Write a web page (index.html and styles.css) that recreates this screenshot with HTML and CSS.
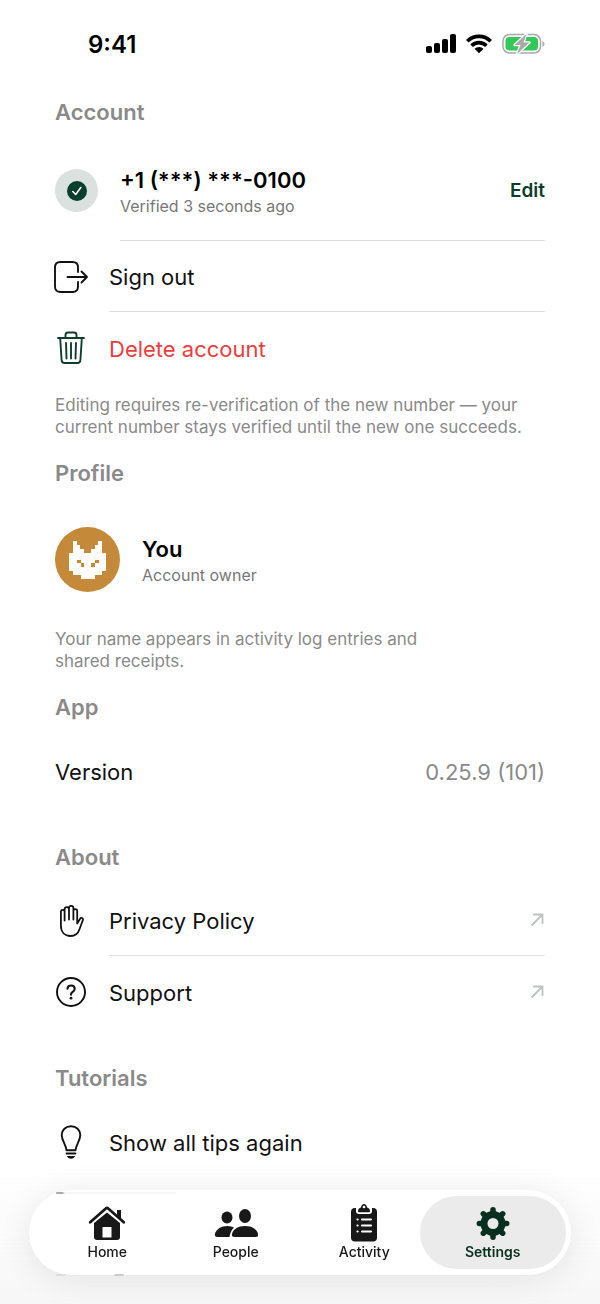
FILE: index.html
```html
<!DOCTYPE html>
<html lang="en">
<head>
<meta charset="utf-8">
<meta name="viewport" content="width=device-width, initial-scale=1">
<title>Settings</title>
<link rel="stylesheet" href="styles.css">
</head>
<body>
<header class="status">
  <time class="clock">9:41</time>
  <div class="indicators">
    <svg width="30" height="20" viewBox="0 0 30 20" fill="#000" aria-label="Signal"><rect x="0" y="12" width="6" height="7" rx="2"/><rect x="8" y="9" width="6" height="10" rx="2"/><rect x="16" y="5" width="6" height="14" rx="2"/><rect x="24" y="0" width="6" height="19" rx="2"/></svg>
    <svg width="26" height="20" viewBox="0 0 26 20" aria-label="Wi-Fi"><g fill="none" stroke="#000" stroke-width="3.6"><path d="M1.3 7.2a16.6 16.6 0 0 1 23.4 0"/><path d="M5.6 11.7a10.5 10.5 0 0 1 14.8 0"/></g><path d="M8.6 14.7a6.3 6.3 0 0 1 8.8 0L13 19.2z"/></svg>
    <svg width="43" height="22" viewBox="0 0 43 22" aria-label="Battery charging"><rect x="1" y="1.500" width="37.500" height="18.500" rx="6.500" fill="none" stroke="#aaa" stroke-width="1.500"/><rect x="3.500" y="4" width="32.500" height="13.500" rx="4" fill="#34c759"/><path d="M40.500 8v6q2-1 2-3t-2-3z" fill="#aaa"/><path d="M24.500 1 12.500 12h6l-3.500 9L27.500 9.500h-6z" fill="#aaa" stroke="#fff" stroke-width="2.400" stroke-linejoin="round" paint-order="stroke"/></svg>
  </div>
</header>

<main class="page">
  <section class="section">
    <h2 class="heading">Account</h2>
    <div class="person">
      <span class="badge">
        <svg width="20" height="20" viewBox="0 0 20 20"><circle cx="10" cy="10" r="10" fill="#0b3d2c"/><path d="M5.800 10.500 8.700 13.500 13.800 6.500" fill="none" stroke="#fff" stroke-width="1.600" stroke-linecap="round" stroke-linejoin="round"/></svg>
      </span>
      <div class="person-body line">
        <div class="lines">
          <strong class="name">+1 (***) ***-0100</strong>
          <span class="detail">Verified 3 seconds ago</span>
        </div>
        <button class="edit" type="button">Edit</button>
      </div>
    </div>
    <button class="row" type="button">
      <svg class="icon" width="36" height="36" viewBox="0 0 36 36" fill="none" stroke="#111" stroke-width="1.900" stroke-linecap="round" stroke-linejoin="round"><path d="M25 13V8.500Q25 3 19.500 3H7.500Q2 3 2 8.500v19Q2 33 7.500 33h12Q25 33 25 27.500V23M14.500 18H34M28.500 12.500 34 18l-5.500 5.500"/></svg>
      <span class="label line">Sign out</span>
    </button>
    <button class="row danger" type="button">
      <svg class="icon" width="36" height="36" viewBox="0 0 36 36" fill="none" stroke="#123d2c" stroke-width="1.900" stroke-linecap="round" stroke-linejoin="round"><path d="M5 8h26M12.500 7.500V5Q12.500 2.500 15 2.500h6Q23.500 2.500 23.500 5v2.500M7.200 8.500l1.400 21.500Q8.800 33 11.500 33h13Q27.200 33 27.400 30l1.400-21.500M13 13l.5 15.500M18 13v15.500M23 13l-.5 15.500"/></svg>
      <span class="label">Delete account</span>
    </button>
    <p class="note">Editing requires re-verification of the new number — your current number stays verified until the new one succeeds.</p>
  </section>

  <section class="section">
    <h2 class="heading">Profile</h2>
    <div class="person tall">
      <svg class="avatar" width="65" height="65" viewBox="0 0 66 66" shape-rendering="crispEdges"><circle cx="33" cy="33" r="33" fill="#c48a39" shape-rendering="auto"/><path fill="#fff" d="M18 14h4v4h3v4h4v4h8v-4h4v-4h3v-4h4v12h4v19h-4v4h-7v4H26v-4h-8v-4h-4V26h4z"/><path fill="#c48a39" d="M22 33h4v4h-4zM26 37h3v4h-3zM41 33h4v4h-4zM37 37h4v4h-4z"/></svg>
      <div class="person-body">
        <div class="lines">
          <strong class="name">You</strong>
          <span class="detail">Account owner</span>
        </div>
      </div>
    </div>
    <p class="note narrow">Your name appears in activity log entries and shared receipts.</p>
  </section>

  <section class="section">
    <h2 class="heading">App</h2>
    <div class="row"><span class="label">Version</span><span class="value">0.25.9 (101)</span></div>
  </section>

  <section class="section spaced">
    <h2 class="heading">About</h2>
    <a class="row" href="#privacy">
      <svg class="icon" width="36" height="36" viewBox="0 0 36 36" fill="none" stroke="#111" stroke-width="1.800" stroke-linecap="round" stroke-linejoin="round"><path d="M11.600 17.500V8.300a1.900 1.900 0 0 0-3.700 0V22.500c0 6.500 3.800 10.500 9.600 10.500 4.800 0 7.700-2.500 9.100-7l3.300-9c.7-2-1.800-3-2.800-1.200L24.200 20.500V8a1.800 1.800 0 0 0-3.700-.2M24.200 8v9M20.400 16.500V5a2 2 0 0 0-4.400 0v11.500M16 16.500V6.300a2 2 0 0 0-4.400 0v11"/></svg>
      <span class="label line">Privacy Policy</span>
      <svg class="arrow" width="15" height="14" viewBox="0 0 15 14" fill="none" stroke="#bfc3c2" stroke-width="1.800"><path d="M1.500 12.500 12.500 1.500M3 1.500h9.500v9.500"/></svg>
    </a>
    <a class="row" href="#support">
      <svg class="icon" width="36" height="36" viewBox="0 0 36 36" fill="none" stroke="#111" stroke-width="1.900" stroke-linecap="round"><circle cx="18" cy="18" r="14"/><path d="M14.500 14.800c.1-2 1.500-3.300 3.600-3.300s3.600 1.300 3.600 3.200c0 1.500-.8 2.300-2 3.100s-1.700 1.400-1.700 2.600v.3" stroke-width="2.100"/><circle cx="18" cy="24.200" r="1.400" fill="#111" stroke="none"/></svg>
      <span class="label">Support</span>
      <svg class="arrow" width="15" height="14" viewBox="0 0 15 14" fill="none" stroke="#bfc3c2" stroke-width="1.800"><path d="M1.500 12.500 12.500 1.500M3 1.500h9.500v9.500"/></svg>
    </a>
  </section>

  <section class="section spaced">
    <h2 class="heading">Tutorials</h2>
    <button class="row" type="button">
      <svg class="icon" width="36" height="36" viewBox="0 0 36 36" fill="none" stroke="#111" stroke-width="1.900" stroke-linecap="round" stroke-linejoin="round"><path d="M13.500 26.200C13.200 21 8.700 16.500 8.700 11c0-5 4-8.800 9.300-8.800s9.300 3.800 9.300 8.800c0 5.500-4.500 10-4.800 15.200zM13.500 29.500h9"/><path d="M14 32h8q-1 2.800-4 2.800T14 32z" fill="#111" stroke="none"/></svg>
      <span class="label">Show all tips again</span>
    </button>
  </section>
</main>

<div class="dock">
  <nav class="tabs">
    <a class="tab" href="#home">
      <svg width="40" height="40" viewBox="0 0 40 40"><path d="M20 9.500 33 20v14q0 3-3 3H10q-3 0-3-3V20z" fill="#181818"/><path d="M3.200 18.800 18.400 5.400q1.600-1.400 3.200 0l15.200 13.400" fill="none" stroke="#fff" stroke-width="6"/><path d="M30 7h4V16.500L30 13z" fill="#181818"/><path d="M3.200 19.300 18.800 5.500q1.200-1 2.400 0l15.600 13.800" fill="none" stroke="#181818" stroke-width="2.800" stroke-linecap="round"/><path d="M15.500 24h9v10.500h-9z" fill="#fff"/></svg>
      <span>Home</span>
    </a>
    <a class="tab" href="#people">
      <svg width="44" height="40" viewBox="0 0 44 40" fill="#181818"><ellipse cx="13" cy="14.500" rx="5.500" ry="6"/><path d="M3.500 34C1 34 .5 32.500 1 30.500 2.500 26 7 23 13.500 23q4 0 6.500 1.500-3.500 3-4.500 9.500z"/><ellipse cx="31" cy="13" rx="6" ry="7"/><path d="M31 23c7 0 12 3.300 13 8 .4 2-.2 3-2.500 3h-21c-2.300 0-2.900-1-2.500-3 1-4.700 6-8 13-8z"/></svg>
      <span>People</span>
    </a>
    <a class="tab" href="#activity">
      <svg width="40" height="40" viewBox="0 0 40 40"><rect x="7" y="5" width="26" height="33.500" rx="4" fill="#181818"/><path d="M12 3h16v5q0 3-3 3H15q-3 0-3-3z" fill="#fff"/><path d="M14 8.500Q14 5 17 4.500 17.500 1 20 1t3 3.500q3 .5 3 4 0 .8-1 .8H15q-1 0-1-.8z" fill="#181818"/><circle cx="20" cy="4" r="1.300" fill="#fff"/><g stroke="#fff" stroke-width="2.200" stroke-linecap="round"><path d="M13.500 16.500h.1M18 16.500h9M13.500 22.500h.1M18 22.500h9M13.500 28.500h.1M18 28.500h9"/></g></svg>
      <span>Activity</span>
    </a>
    <a class="tab current" href="#settings" aria-current="page">
      <svg width="40" height="40" viewBox="0 0 40 40"><g fill="none" stroke="#082f20" stroke-linecap="round"><circle cx="20" cy="20.500" r="9" stroke-width="7"/><path d="M20 6.800v27.400M6.300 20.500h27.400M10.300 10.800l19.400 19.400M10.300 30.200l19.400-19.400" stroke-width="5.500"/></g><circle cx="20" cy="20.500" r="5.500" fill="#ebebeb"/></svg>
      <span>Settings</span>
    </a>
  </nav>
</div>
</body>
</html>
```
FILE: styles.css
```css
* { box-sizing: border-box; }

body {
  margin: 0;
  min-height: 100vh;
  background: #fff;
  color: #111;
  font-family: Inter, "Liberation Sans", sans-serif;
  font-size: 22px;
}

svg { display: block; flex: none; }

.status {
  display: flex;
  align-items: center;
  justify-content: space-between;
  height: 98px;
  padding: 0 55px 10px 88px;
}

.clock { font-size: 24px; font-weight: 600; color: #000; }
.indicators { display: flex; align-items: center; gap: 10px; }

.page { padding: 0 55px 127px; }
.section + .section { margin-top: 21px; }
.section + .spaced { margin-top: 37px; }

.heading {
  margin: 0 0 14px;
  font-size: 22px;
  line-height: 28px;
  font-weight: 600;
  color: #8a8a8a;
}

.row {
  display: flex;
  align-items: center;
  width: 100%;
  height: 71px;
  padding: 0;
  border: 0;
  background: none;
  color: #111;
  font: inherit;
  text-align: left;
  text-decoration: none;
}

.icon { margin: 0 20px 0 -2px; }

.label {
  display: flex;
  flex: 1;
  align-items: center;
  align-self: stretch;
  padding-top: 2px;
}

.line,
.line + .arrow { border-bottom: 1px solid #dedede; }
.line + .arrow { align-self: stretch; height: auto; }
.value { padding-top: 2px; color: #8a8a8a; }
.danger { color: #eb3d40; }

.person { display: flex; height: 101px; align-items: center; }
.person-body {
  display: flex;
  flex: 1;
  align-self: stretch;
  align-items: center;
  justify-content: space-between;
  margin-left: 22px;
}
.lines { display: flex; flex-direction: column; padding-top: 4px; }
.name { font-size: 22px; line-height: 28px; font-weight: 600; color: #000; }
.detail { font-size: 16px; line-height: 24px; color: #777; }
.tall { height: 116px; }

.badge {
  display: grid;
  place-items: center;
  width: 43px;
  height: 43px;
  border-radius: 50%;
  background: #dbe1df;
}

.edit {
  padding: 0;
  border: 0;
  background: none;
  color: #0b3d2c;
  font: inherit;
  font-size: 19px;
  font-weight: 600;
}

.note {
  margin: 11px 0 0;
  font-size: 17px;
  line-height: 22px;
  color: #8a8a8a;
}
.narrow { max-width: 400px; }

.dock {
  position: fixed;
  inset: auto 0 0;
  padding: 30px 29px 29px;
  background: linear-gradient(rgba(255, 255, 255, 0), #f7f7f7);
}

.tabs {
  position: relative;
  display: flex;
  height: 85px;
  padding: 6px 14px;
  border-radius: 43px;
  background: #fff;
  box-shadow: 0 5px 34px rgba(0, 0, 0, 0.09);
}

/* Slivers of the list still showing at the rim of the bar */
.tabs::before,
.tabs::after {
  content: "";
  position: absolute;
  left: 27px;
  height: 2px;
  border-radius: 1px;
}
.tabs::before {
  top: 2px;
  width: 120px;
  background: linear-gradient(90deg, #aaa 6px, #f6f6f6 9px);
}
.tabs::after {
  bottom: -1px;
  width: 68px;
  background: linear-gradient(90deg, #ddd 9px, transparent 10px 58px, #ccc 59px);
}

.tab {
  position: relative;
  display: flex;
  flex: 1;
  flex-direction: column;
  align-items: center;
  padding-top: 7px;
  color: #181818;
  font-size: 14px;
  line-height: 18px;
  font-weight: 500;
  text-decoration: none;
}
.tab > * { position: relative; }
.current { color: #082f20; font-weight: 600; }
.current::before {
  content: "";
  position: absolute;
  inset: 0 -9px;
  border-radius: 37px;
  background: #ebebeb;
}
```
